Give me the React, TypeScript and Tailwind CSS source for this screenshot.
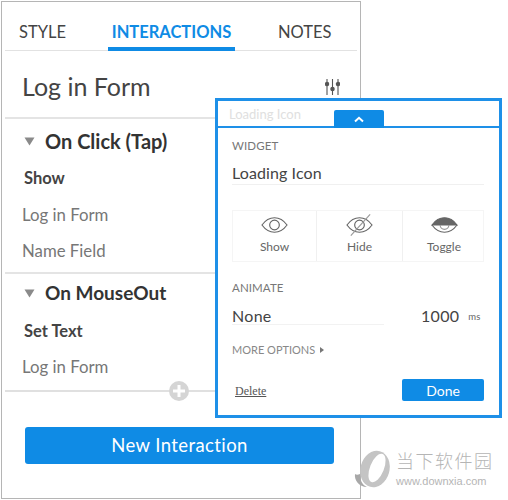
import React from 'react';

const font = { fontFamily: 'Lato, "Noto Sans", sans-serif' };

const Triangle = () => (
  <svg width="11" height="9" viewBox="0 0 11 9" className="shrink-0">
    <path d="M0.5 0.5h10l-5 8z" fill="#8a8a8a" />
  </svg>
);

const SlidersIcon = () => (
  <svg width="15" height="18" viewBox="0 0 15 18" fill="none" stroke="#555" strokeWidth="1.1">
    <path d="M2 1v16M7.500 1v16M13 1v16" />
    <circle cx="2" cy="6" r="1.700" fill="#555" />
    <circle cx="7.500" cy="11" r="1.700" fill="#555" />
    <circle cx="13" cy="6" r="1.700" fill="#555" />
  </svg>
);

const EyeShow = () => (
  <svg width="27" height="20" viewBox="0 0 28 20" fill="none" stroke="#666" strokeWidth="1.200">
    <path d="M1 10C5 4.500 9 2.500 14 2.500S23 4.500 27 10C23 15.500 19 17.500 14 17.500S5 15.500 1 10Z" />
    <circle cx="14" cy="10" r="5" />
  </svg>
);

const EyeHide = () => (
  <svg width="27" height="24" viewBox="0 0 28 24" fill="none" stroke="#666" strokeWidth="1.200">
    <path d="M1 12C5 6.500 9 4.500 14 4.500S23 6.500 27 12C23 17.500 19 19.500 14 19.500S5 17.500 1 12Z" />
    <circle cx="14" cy="12" r="5" />
    <path d="M25 1L5 23" stroke="#999" />
  </svg>
);

const EyeToggle = () => (
  <svg width="27" height="20" viewBox="0 0 28 20" fill="none" stroke="#666" strokeWidth="1.200">
    <path d="M1 10C5 4.500 9 2.500 14 2.500S23 4.500 27 10Z" fill="#666" />
    <path d="M1 10C5 15.500 9 17.500 14 17.500S23 15.500 27 10" />
    <path d="M9.500 10a4.500 4.500 0 0 0 9 0" stroke="#999" />
  </svg>
);

const Row = ({ text, bold, className }: { text: string; bold?: boolean; className: string }) => (
  <div className={`flex items-center shrink-0 ${className} ${bold ? 'pl-[22px] text-[16.500px] font-bold text-[#444]' : 'pl-[20px] text-[16.800px] text-[#777]'}`}>
    {text}
  </div>
);

const actions = [
  { label: 'Show', icon: <EyeShow /> },
  { label: 'Hide', icon: <EyeHide /> },
  { label: 'Toggle', icon: <EyeToggle /> },
];

export default function App() {
  return (
    <div className="relative w-[508px] h-[500px] bg-white overflow-hidden" style={font}>
      {/* main panel */}
      <div className="w-[360px] h-[498px] ml-px mt-px border border-[#b5b5b5] bg-white flex flex-col">
        <div className="mx-[3px] h-[49px] shrink-0 flex items-stretch border-b border-[#e2e2e2] text-[16.500px]">
          <div className="w-[103px] pl-[14px] pt-[18px] text-[#444]">STYLE</div>
          <div className="w-[127px] pt-[18px] -mb-px border-b-4 border-[#0f8be5] text-center font-bold text-[#0f8be5] text-[16.500px]">INTERACTIONS</div>
          <div className="flex-1 pt-[18px] pl-[43px] text-[#444]">NOTES</div>
        </div>

        <div className="h-[68px] shrink-0 flex items-center justify-between pt-[6px] pl-[17px] pr-[17px] border-b-2 border-[#e4e4e4] mx-[3px] text-[25px] text-[#444]">
          <span>Log in Form</span>
          <SlidersIcon />
        </div>

        <div className="h-[44px] shrink-0 flex items-center gap-[10px] pl-[22px] text-[20px] font-bold text-[#333]">
          <Triangle />
          On Click (Tap)
        </div>
        <Row text="Show" bold className="h-[34px] pb-[4px]" />
        <Row text="Log in Form" className="h-[36px]" />
        <Row text="Name Field" className="h-[36px]" />

        <div className="mx-[3px] mt-[3px] h-[2px] shrink-0 bg-[#e4e4e4]" />

        <div className="h-[38px] shrink-0 flex items-center gap-[10px] pl-[22px] text-[19px] font-bold text-[#333]">
          <Triangle />
          On MouseOut
        </div>
        <Row text="Set Text" bold className="h-[38px]" />
        <Row text="Log in Form" className="h-[34px]" />

        <div className="relative mx-[3px] h-[2px] shrink-0 mt-[6px] bg-[#e0e0e0]">
          <div className="absolute left-[164px] top-[-9px] w-[20px] h-[20px] rounded-full bg-[#d5d5d5] flex items-center justify-center">
            <svg width="12" height="12" viewBox="0 0 12 12">
              <path d="M4.500 0h3v4.500H12v3H7.500V12h-3V7.500H0v-3h4.500z" fill="#fff" />
            </svg>
          </div>
        </div>

        <div className="mt-[35px] ml-[23px] w-[309px] h-[37px] rounded-[3px] bg-[#0f8be5] flex items-center justify-center text-[18.500px] tracking-[0.4px] text-white">
          New Interaction
        </div>
      </div>

      {/* popup over the panel */}
      <div className="absolute left-[215px] top-[98px] w-[287px] h-[320px] border-[3px] border-[#1e90e8] bg-white flex flex-col">
        <div className="relative h-[27px] shrink-0 border-b-2 border-[#1e90e8] pl-[11px] pt-[4px] text-[13px] text-[#e0e0e0]">
          Loading Icon
          <div className="absolute left-[116px] top-[9px] w-[50px] h-[18px] rounded-t-[2px] bg-[#0f8be5] flex items-center justify-center">
            <svg width="10" height="7" viewBox="0 0 10 7" fill="none" stroke="#fff" strokeWidth="2">
              <path d="M1 5.500L5 1.800L9 5.500" />
            </svg>
          </div>
        </div>

        <div className="flex-1 flex flex-col pl-[14px] pr-[15px]">
          <div className="mt-[9px] text-[11.500px] tracking-[0.1px] text-[#777]">WIDGET</div>
          <div className="mt-[7px] h-[24px] border-b border-[#f0f0f0] text-[16px] tracking-[0.1px] text-[#444]">Loading Icon</div>

          <div className="mt-[25px] h-[52px] grid grid-cols-[84px_86px_82px] border border-[#f5f5f5]">
            {actions.map((a, i) => (
              <div key={a.label} className={`flex flex-col items-center justify-end pb-[7px] text-[12px] text-[#666] ${i < 2 ? 'border-r border-[#f0f0f0]' : ''}`}>
                <div className="h-[24px] flex items-center">{a.icon}</div>
                <div className="mt-[3px] leading-[14px]">{a.label}</div>
              </div>
            ))}
          </div>

          <div className="mt-[17px] text-[11.500px] tracking-[0.1px] text-[#777]">ANIMATE</div>
          <div className="mt-[7px] h-[21px] flex items-start text-[16px] text-[#444]">
            <span className="w-[152px] h-full border-b border-[#f2f2f2] tracking-[0.3px]">None</span>
            <span className="ml-[37px] tracking-[0.3px]">1000</span>
            <span className="ml-[9px] mt-[6px] text-[9.500px] text-[#666]">ms</span>
          </div>

          <div className="mt-[17px] flex items-center gap-[5px] text-[11px] text-[#888]">
            MORE OPTIONS
            <svg width="4" height="6" viewBox="0 0 4 6">
              <path d="M0 0l4 3-4 3z" fill="#777" />
            </svg>
          </div>

          <div className="mt-[21px] flex items-center justify-between">
            <span className="ml-[3px] mt-[2px] text-[12px] text-[#555] underline" style={{ fontFamily: '"Liberation Serif", serif' }}>Delete</span>
            <div className="w-[82px] h-[22px] rounded-[2px] bg-[#0f8be5] flex items-center justify-center text-[14px] text-white">Done</div>
          </div>
        </div>
      </div>

      {/* watermark */}
      <div className="absolute left-[354px] top-[450px] flex items-center gap-[5px]">
        <svg width="37" height="39" viewBox="0 0 37 39">
          <path d="M1 24C0 30 5 37 13 37C8 35 6 30 6 24C4 25 2 25 1 24Z" fill="#a8a8a8" />
          <ellipse cx="21" cy="19" rx="14.500" ry="18.500" transform="rotate(15 21 19)" fill="#c4c4c4" />
          <ellipse cx="23" cy="18" rx="7" ry="15" transform="rotate(22 23 18)" fill="#fff" />
        </svg>
        <div className="flex flex-col items-start -mt-[3px]">
          <div className="text-[18px] leading-[20px] tracking-[1.500px] text-[#b5b5b5]" style={{ fontFamily: '"Noto Sans CJK SC", sans-serif', fontWeight: 300 }}>当下软件园</div>
          <div className="mt-[5px] text-[11px] leading-[12px] text-[#b5b5b5]" style={{ fontFamily: '"Liberation Sans", sans-serif' }}>www.downxia.com</div>
        </div>
      </div>
    </div>
  );
}
